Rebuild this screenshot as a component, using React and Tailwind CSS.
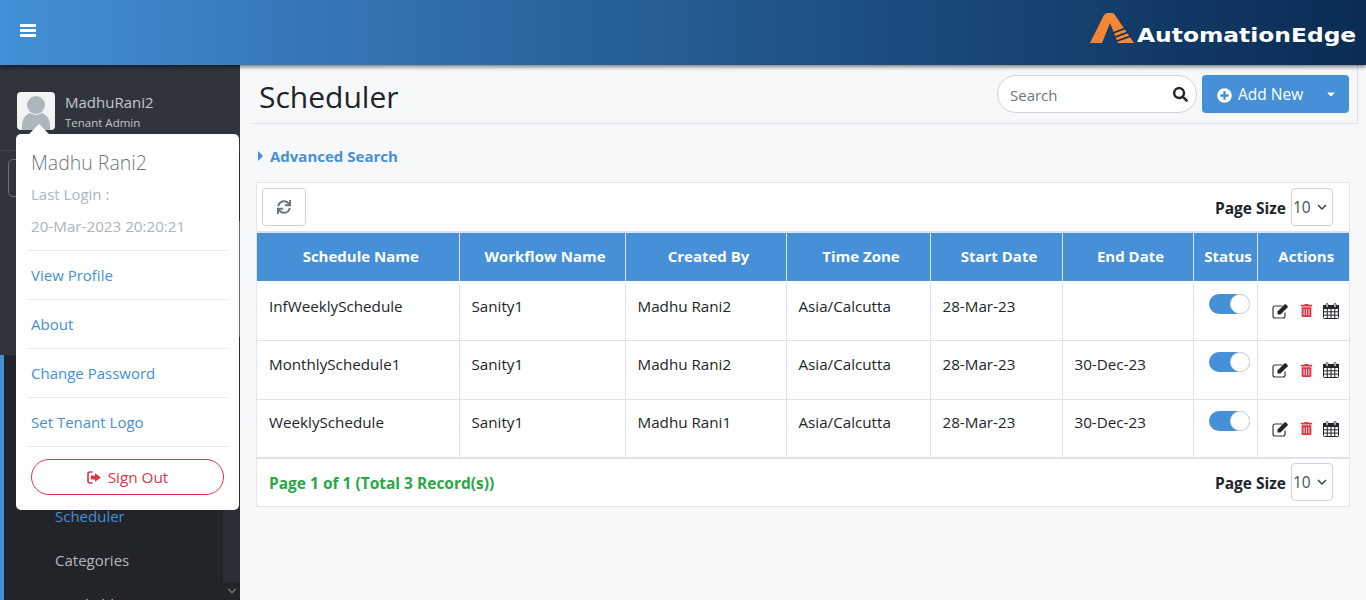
import { FaSearch, FaPlusCircle, FaCaretDown, FaSync, FaTrashAlt, FaChevronDown } from 'react-icons/fa';

const rows = [
  { name: 'InfWeeklySchedule', workflow: 'Sanity1', by: 'Madhu Rani2', zone: 'Asia/Calcutta', start: '28-Mar-23', end: '', h: 'h-[59px]', textPb: 'pb-[8px]', togglePb: 'pb-[12px]' },
  { name: 'MonthlySchedule1', workflow: 'Sanity1', by: 'Madhu Rani2', zone: 'Asia/Calcutta', start: '28-Mar-23', end: '30-Dec-23', h: 'h-[59px]', textPb: 'pb-[10px]', togglePb: 'pb-[16px]' },
  { name: 'WeeklySchedule', workflow: 'Sanity1', by: 'Madhu Rani1', zone: 'Asia/Calcutta', start: '28-Mar-23', end: '30-Dec-23', h: 'h-[58px]', textPb: 'pb-[12px]', togglePb: 'pb-[14px]' },
];

const columns = [
  ['Schedule Name', 'w-[202px]'],
  ['Workflow Name', 'w-[166px]'],
  ['Created By', 'w-[161px]'],
  ['Time Zone', 'w-[144px]'],
  ['Start Date', 'w-[132px]'],
  ['End Date', 'w-[131px]'],
  ['Status', 'w-[64px]'],
  ['Actions', 'w-[92px]'],
];

const BarsIcon = () => (
  <svg width="16" height="13" viewBox="0 0 16 13" fill="#fff" className="mb-[4px]">
    <rect width="16" height="3" rx="0.5" />
    <rect y="5" width="16" height="3" rx="0.5" />
    <rect y="10" width="16" height="3" rx="0.5" />
  </svg>
);

const EditIcon = () => (
  <svg width="17" height="16" viewBox="0 0 17 16" fill="none">
    <path d="M10.500 3H3a2 2 0 0 0-2 2v8a2 2 0 0 0 2 2h8a2 2 0 0 0 2-2V9.500" stroke="#343a40" strokeWidth="1.200" />
    <path d="M5.500 8.500L12.500 1.500c.5-.5 1-.5 1.500 0l1.500 1.500c.5.5.5 1 0 1.500L8.500 11.500H5.500z" fill="#212529" />
  </svg>
);

const CalendarIcon = () => (
  <svg width="16" height="16" viewBox="0 0 16 16" fill="none">
    <rect x="0.500" y="2.500" width="15" height="13" rx="1" fill="#fff" stroke="#212529" />
    <rect x="0.500" y="2.500" width="15" height="3" fill="#212529" stroke="#212529" />
    <path d="M4.250 5.500v10M8 5.500v10M11.750 5.500v10M.5 8.800h15M.5 12.100h15" stroke="#212529" strokeWidth="1" />
    <rect x="3" y="0.500" width="2" height="4" rx="1" fill="#fff" stroke="#212529" strokeWidth="0.800" />
    <rect x="11" y="0.500" width="2" height="4" rx="1" fill="#fff" stroke="#212529" strokeWidth="0.800" />
  </svg>
);

const SignOutIcon = () => (
  <svg width="15" height="13" viewBox="0 0 15 13" fill="#dc3545">
    <path d="M5.500 1H3a2 2 0 0 0-2 2v7a2 2 0 0 0 2 2h2.500" fill="none" stroke="#dc3545" strokeWidth="1.600" />
    <path d="M8 2.200v2.300H4v4h4v2.300l6-4.300z" />
  </svg>
);

const PageSize = () => (
  <div className="flex items-center gap-[5px]">
    <span className="mt-[4px] text-[15.5px] font-bold text-[#212529]">Page Size</span>
    <div className="flex h-[38px] w-[42px] items-center justify-between rounded border border-[#ced4da] bg-white pl-[1px] pr-[5px] text-[15.5px] text-[#495057]">
      <span className="mt-[2px]">10</span>
      <svg width="10" height="6" viewBox="0 0 10 6" fill="none" stroke="#343a40" strokeWidth="1.400">
        <path d="M1 1l4 4 4-4" />
      </svg>
    </div>
  </div>
);

const ProfileMenu = () => (
  <div className="absolute left-[16px] top-[134px] z-30 h-[376px] w-[223px] rounded-[5px] bg-white px-[11px] pt-[15px]">
    <div className="absolute -top-[7px] left-[16px] size-[14px] rotate-45 bg-white" />
    <div className="px-[4px] text-[19.5px] leading-[28px] font-light text-[#6c757d]">Madhu Rani2</div>
    <div className="mt-[1px] px-[4px] text-[15px] leading-[32px] text-[#adb5bd]">Last Login :</div>
    <div className="px-[4px] text-[15.2px] leading-[32px] text-[#adb5bd]">20-Mar-2023 20:20:21</div>
    {['View Profile', 'About', 'Change Password', 'Set Tenant Logo'].map((item, i) => (
      <div key={item} className={`${i === 0 ? 'mt-[8px]' : ''} border-t border-[#e9ecef] px-[4px] text-[15px] leading-[48px] text-[#4590d6]`}>
        {item}
      </div>
    ))}
    <div className="border-t border-[#e9ecef] px-[4px] pt-[12px]">
      <div className="flex h-[36px] items-center justify-center gap-[6px] rounded-[18px] border border-[#dc3545] text-[15.3px] text-[#dc3545]">
        <SignOutIcon />
        Sign Out
      </div>
    </div>
  </div>
);

const Sidebar = () => (
  <aside className="flex w-[240px] shrink-0 flex-col bg-[#30343c]">
    <div className="flex h-[86px] shrink-0 items-start gap-[10px] border-b border-[#41454c] pl-[17px] pt-[27px]">
      <div className="relative size-[38px] overflow-hidden rounded-[4px] bg-[#f2f3f3]">
        <div className="absolute left-[5px] top-[20px] h-[24px] w-[28px] rounded-t-[13px] bg-[#adb5bd]" />
        <div className="absolute left-[10px] top-[4px] size-[18px] rounded-full bg-[#adb5bd] ring-1 ring-[#f2f3f3]" />
      </div>
      <div className="-mt-[2px]">
        <div className="text-[15px] leading-[24px] text-[#c2c7cc]">MadhuRani2</div>
        <div className="mt-[1px] text-[11.5px] leading-[16px] text-[#c2c7cc]">Tenant Admin</div>
      </div>
    </div>
    <div className="flex min-h-0 flex-1">
      <div className="flex min-w-0 flex-1 flex-col">
        <div className="h-[204px] shrink-0 pl-[8px] pt-[8px]">
          <div className="h-[38px] w-[200px] rounded-[5px] border border-[#6c7077]" />
        </div>
        <div className="flex-1 border-l-4 border-[#4590d6] bg-[#212429] pl-[51px] pt-[139px] text-[15px] leading-[44px] text-[#b5b9bd]">
          <div className="text-[#4590d6]">Scheduler</div>
          <div>Categories</div>
          <div>Trackable</div>
        </div>
      </div>
      <div className="flex w-[17px] shrink-0 flex-col bg-[#2b2e36]">
        <div className="mt-[70px] h-[116px] w-full bg-[#6b6e75]" />
        <div className="flex-1" />
        <div className="flex h-[18px] items-center justify-center bg-[#212429] text-[#6b6e75]">
          <FaChevronDown size={10} />
        </div>
      </div>
    </div>
  </aside>
);

const Main = () => (
  <main className="min-w-0 flex-1 bg-[#f7f8fa] pl-[11px] pr-[8px]">
    <div className="flex h-[59px] items-center justify-between border-r border-b border-[#dee2e6] pl-[8px] pr-[8px]">
      <h1 className="mt-[5px] text-[30px] leading-[40px] text-[#212529]">Scheduler</h1>
      <div className="flex items-center gap-[5px]">
        <div className="flex h-[38px] w-[200px] items-center justify-between rounded-[19px] border border-[#ced4da] bg-white pl-[12px] pr-[8px] text-[15px] text-[#6c757d]">
          <span className="mt-[2px]">Search</span>
          <FaSearch size={15} className="text-[#212529]" />
        </div>
        <div className="flex h-[38px] w-[147px] items-center justify-between rounded bg-[#4590d6] pl-[15px] pr-[12px] text-[15.5px] text-white">
          <span className="mt-[2px] flex items-center gap-[6px]">
            <FaPlusCircle size={15} />
            Add New
          </span>
          <FaCaretDown size={12} />
        </div>
      </div>
    </div>

    <div className="flex h-[58px] items-center gap-[7px] pl-[7px] pt-[6px] text-[15px] font-bold text-[#4590d6]">
      <svg width="5" height="10" viewBox="0 0 5 10" fill="#4590d6">
        <path d="M0 0l5 5-5 5z" />
      </svg>
      Advanced Search
    </div>

    <div className="ml-[5px] w-[1094px] border border-[#e3e5e8] bg-white">
      <div className="flex h-[48px] items-center justify-between pl-[5px] pr-[16px]">
        <div className="flex h-[38px] w-[44px] items-center justify-center rounded border border-[#ced4da] text-[#6c757d]">
          <FaSync size={14} />
        </div>
        <PageSize />
      </div>
      <table className="w-full table-fixed border-collapse border-t-2 border-[#dee2e6] text-[15.2px] text-[#212529]">
        <thead>
          <tr className="h-[49px] bg-[#4590d6] text-white">
            {columns.map(([label, w], i) => (
              <th key={label} className={`${w} ${i > 0 ? 'border-l border-[#dee2e6]' : ''} p-0 pb-[2px] pl-[6px] text-center text-[15px] font-bold`}>
                {label}
              </th>
            ))}
          </tr>
        </thead>
        <tbody>
          {rows.map((row) => (
            <tr key={row.name} className={`${row.h} border-b border-[#dee2e6]`}>
              <td className={`pl-[12px] ${row.textPb}`}>{row.name}</td>
              {[row.workflow, row.by, row.zone, row.start, row.end].map((value, i) => (
                <td key={i} className={`border-l border-[#dee2e6] pl-[12px] ${row.textPb}`}>{value}</td>
              ))}
              <td className={`border-l border-[#dee2e6] pl-[15px] ${row.togglePb}`}>
                <div className="flex h-[20px] w-[41px] items-center justify-end rounded-full bg-[#4590d6]">
                  <div className="size-[20px] rounded-full border border-[#dee2e6] bg-white" />
                </div>
              </td>
              <td className="border-l border-[#dee2e6] pl-[14px]">
                <div className="flex items-center gap-[10px] pt-[1px]">
                  <EditIcon />
                  <FaTrashAlt size={13} className="ml-[1px] text-[#dc3545]" />
                  <CalendarIcon />
                </div>
              </td>
            </tr>
          ))}
        </tbody>
      </table>
      <div className="flex h-[48px] items-center justify-between border-t border-[#dee2e6] pl-[12px] pr-[16px]">
        <span className="mt-[4px] text-[15.5px] font-bold text-[#28a745]">Page 1 of 1 (Total 3 Record(s))</span>
        <PageSize />
      </div>
    </div>
  </main>
);

export default function App() {
  return (
    <div className="relative flex h-[600px] flex-col overflow-hidden font-['Open_Sans',sans-serif]">
      <header className="relative z-20 flex h-[65px] shrink-0 items-center justify-between bg-gradient-to-r from-[#4390d6] to-[#0a2c54] pl-[20px] pr-[11px] shadow-[0_2px_4px_rgba(0,0,0,0.5)]">
        <BarsIcon />
        <div className="flex items-end gap-[3px] pb-[9px]">
          <svg width="44" height="30" viewBox="0 0 44 30">
            <path d="M0 30L14 2Q15 0 18 0H22Q24 0 25 2L44 30H28L20 10L12 30Z" fill="#f58634" />
            <path d="M23 20L36 15M25.500 24L38.500 19M27 28L41 23" stroke="#0a2c54" strokeWidth="1.500" />
          </svg>
          <span className="w-[218px] origin-left scale-x-[1.23] whitespace-nowrap font-['DejaVu_Sans',sans-serif] text-[19px] leading-[16px] font-bold text-white">
            AutomationEdge
          </span>
        </div>
      </header>
      <div className="flex min-h-0 flex-1">
        <Sidebar />
        <Main />
      </div>
      <ProfileMenu />
    </div>
  );
}
